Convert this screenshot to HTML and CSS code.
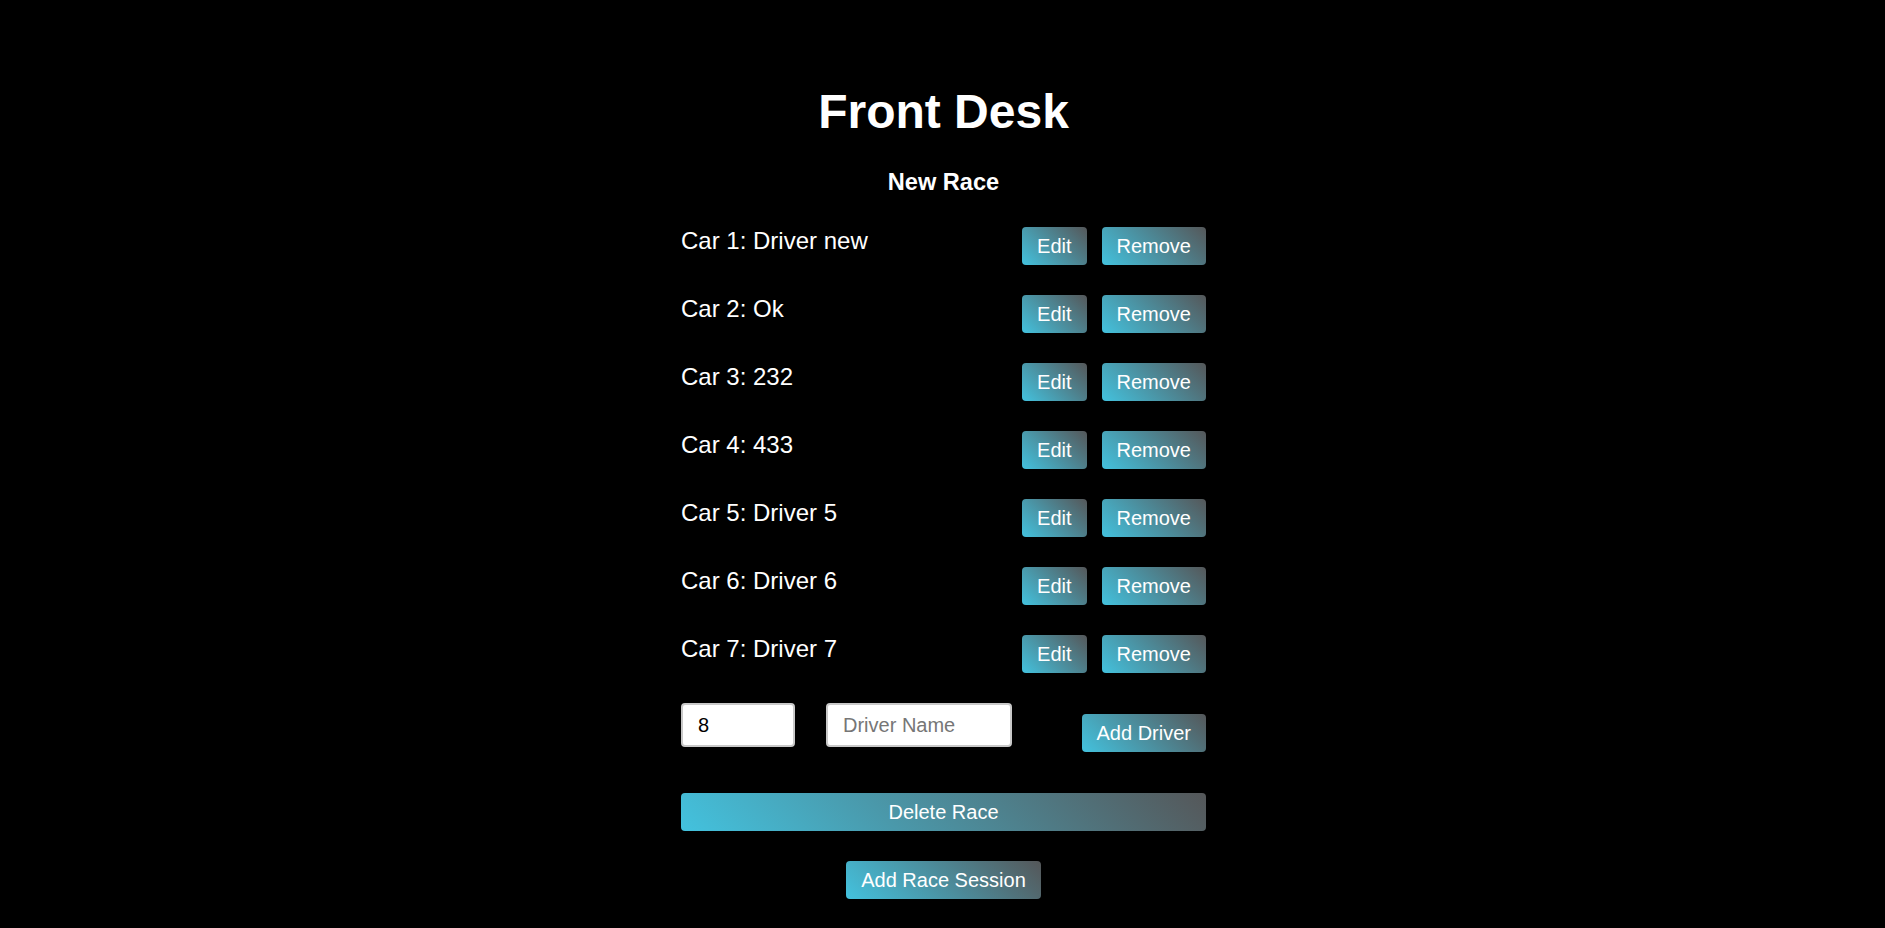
FILE: index.html
```html
<!DOCTYPE html>
<html lang="en">
<head>
<meta charset="utf-8">
<title>Front Desk</title>
<link rel="stylesheet" href="styles.css">
</head>
<body>
<main class="desk">
  <h1 class="title">Front Desk</h1>
  <h3 class="race-name">New Race</h3>
  <ul class="drivers">
    <li class="driver-row"><span class="driver-label">Car 1: Driver new</span><div class="actions"><button class="btn">Edit</button><button class="btn">Remove</button></div></li>
    <li class="driver-row"><span class="driver-label">Car 2: Ok</span><div class="actions"><button class="btn">Edit</button><button class="btn">Remove</button></div></li>
    <li class="driver-row"><span class="driver-label">Car 3: 232</span><div class="actions"><button class="btn">Edit</button><button class="btn">Remove</button></div></li>
    <li class="driver-row"><span class="driver-label">Car 4: 433</span><div class="actions"><button class="btn">Edit</button><button class="btn">Remove</button></div></li>
    <li class="driver-row"><span class="driver-label">Car 5: Driver 5</span><div class="actions"><button class="btn">Edit</button><button class="btn">Remove</button></div></li>
    <li class="driver-row"><span class="driver-label">Car 6: Driver 6</span><div class="actions"><button class="btn">Edit</button><button class="btn">Remove</button></div></li>
    <li class="driver-row"><span class="driver-label">Car 7: Driver 7</span><div class="actions"><button class="btn">Edit</button><button class="btn">Remove</button></div></li>
  </ul>
  <form class="add-form">
    <input class="field field-car" type="text" value="8">
    <input class="field field-name" type="text" placeholder="Driver Name">
    <button type="button" class="btn btn-add">Add Driver</button>
  </form>
  <button class="btn btn-delete">Delete Race</button>
  <div class="session-wrap">
    <button class="btn">Add Race Session</button>
  </div>
</main>
</body>
</html>
```
FILE: styles.css
```css
html, body {
  background: #000;
}
body {
  margin: 0;
  padding: 84px 0 0 2px;
  font-family: "Liberation Sans", Arial, sans-serif;
  color: #fff;
}
.desk {
  width: 525px;
  margin: 0 auto;
}
.title {
  margin: 0 0 30px;
  font-size: 48px;
  line-height: 55px;
  font-weight: bold;
  text-align: center;
}
.race-name {
  margin: 0 0 31px;
  font-size: 23.6px;
  line-height: 27px;
  font-weight: bold;
  text-align: center;
}
.drivers {
  list-style: none;
  margin: 0;
  padding: 0;
}
.driver-row {
  display: flex;
  justify-content: space-between;
  align-items: flex-start;
  margin-bottom: 30px;
}
.driver-label {
  font-size: 24px;
  line-height: 28px;
}
.actions {
  display: flex;
  gap: 15px;
}
.btn {
  height: 38px;
  padding: 0 15px;
  border: none;
  border-radius: 4px;
  background: linear-gradient(45deg, #43c2de, #555759);
  color: #fff;
  font-family: "Liberation Sans", Arial, sans-serif;
  font-size: 20px;
  line-height: 23px;
  cursor: pointer;
}
.add-form {
  display: flex;
  align-items: flex-start;
  margin: 0 0 41px;
}
.field {
  box-sizing: border-box;
  height: 44px;
  padding: 0 15px;
  border: 2px solid #c9c9c9;
  border-radius: 4px;
  background: #fff;
  color: #000;
  font-family: "Liberation Sans", Arial, sans-serif;
  font-size: 20px;
}
.field::placeholder {
  color: #767676;
}
.field-car {
  width: 114px;
  margin-right: 31px;
}
.field-name {
  width: 186px;
}
.btn-add {
  margin-left: auto;
  margin-top: 11px;
}
.btn-delete {
  display: block;
  width: 100%;
}
.session-wrap {
  display: flex;
  justify-content: center;
  margin-top: 30px;
}
```
